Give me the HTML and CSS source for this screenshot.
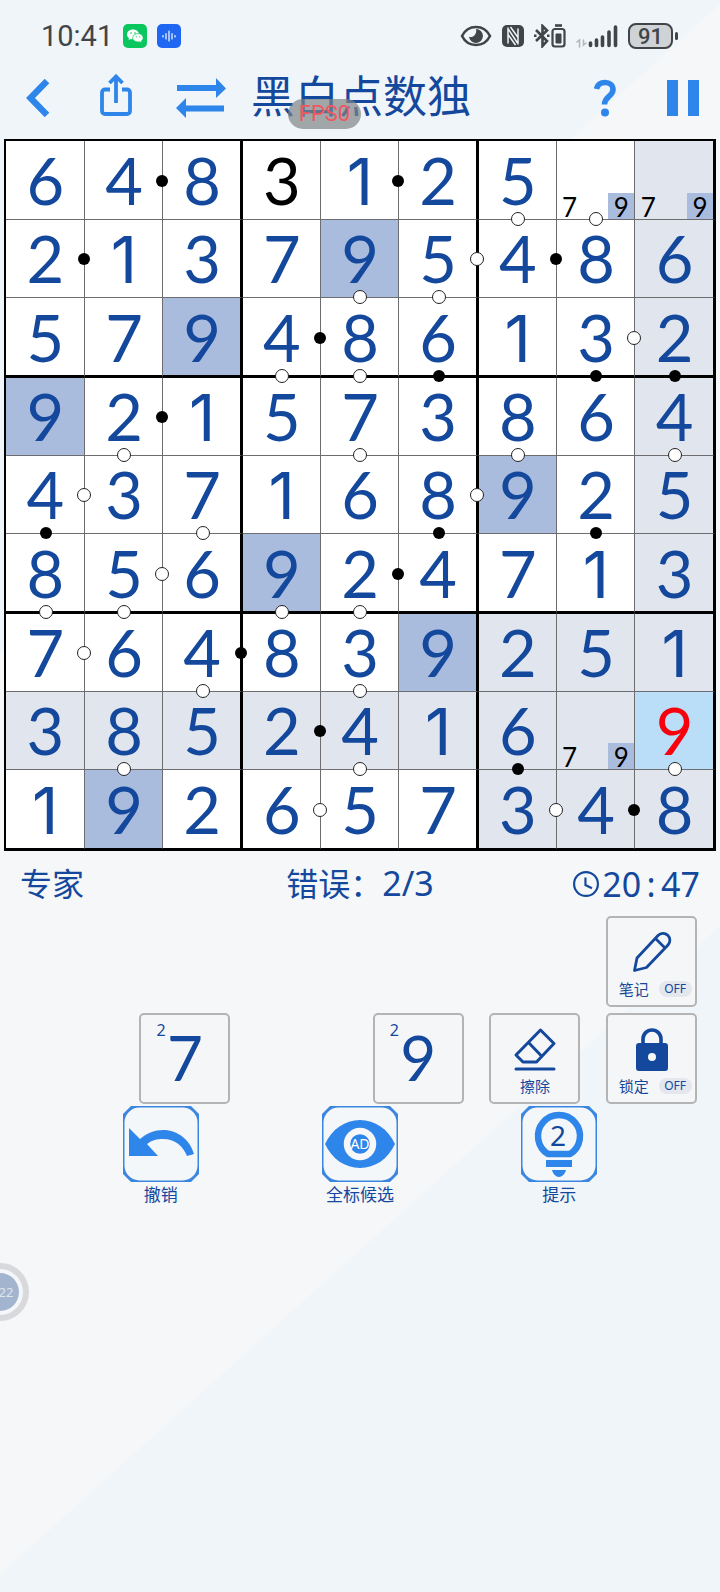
FILE: index.html
```html
<!DOCTYPE html>
<html lang="zh-CN">
<head>
<meta charset="utf-8">
<meta name="viewport" content="width=device-width, initial-scale=1">
<title>黑白点数独</title>
<link rel="stylesheet" href="styles.css">
</head>
<body>
<div class="app">
<div class="statusbar">
  <span class="clock">10:41</span>
  <svg class="app-badge" viewBox="0 0 24 24" aria-hidden="true"><rect width="24" height="24" rx="5" fill="#09c75e"/><path d="M10 5.500c-3.600 0-6 2.200-6 4.900 0 1.500.8 2.800 2 3.700L5.600 16l2.200-1.100c.8.200 1.300.3 2.200.3 3.400 0 6-2.200 6-4.800s-2.600-4.900-6-4.900z" fill="#fff"/><path d="M15 9.600c-3 0-5.300 1.900-5.300 4.200s2.300 4.200 5.300 4.200c.6 0 1.200-.1 1.700-.2l2 1-.4-1.700c1.100-.8 1.800-1.900 1.800-3.200 0-2.400-2.300-4.300-5.100-4.300z" fill="#fff" stroke="#09c75e" stroke-width=".7"/><g fill="#09c75e"><circle cx="8" cy="9" r=".8"/><circle cx="12" cy="9" r=".8"/><circle cx="13.300" cy="12.800" r=".6"/><circle cx="16.700" cy="12.800" r=".6"/></g></svg>
  <svg class="app-badge" viewBox="0 0 24 24" aria-hidden="true"><rect width="24" height="24" rx="5" fill="#1f66f2"/><path d="M6 11.500v1.500M9 9.500v5.500M12 7v10M15 9.500v5.500M18 11.500v1.500" stroke="#fff" stroke-width="1.200" stroke-linecap="round"/></svg>
  <span class="spacer"></span>
  <svg class="st-eye" viewBox="0 0 32 22" fill="none" stroke="#414549" aria-hidden="true"><path d="M2 11C5 5 10 2 16 2s11 3 14 9c-3 6-8 9-14 9S5 17 2 11z" stroke-width="2.600"/><path d="M16 4a7 7 0 1 1-7 7.500c3 2.200 8.500-2 7-7.500z" fill="#414549" stroke="none"/></svg>
  <svg class="st-nfc" viewBox="0 0 22 22" aria-hidden="true"><rect width="22" height="22" rx="5" fill="#414549"/><path d="M6 2.500v16M6.500 4.500l9 13.500M16 3.500v16M8.500 2l7.500 10.500M6 9.500l7.500 10.500" stroke="#eff4f8" stroke-width="1.500" fill="none"/></svg>
  <svg class="st-bt" viewBox="0 0 32 24" fill="none" stroke="#414549" stroke-width="2.600" aria-hidden="true"><path d="M2 6l11 11-4.500 5V2L13 6.500 2 17"/><path d="M0 11.700h2.500M13 11.700h2.500"/><rect x="18.500" y="5" width="12" height="17.500" rx="2.500" stroke-width="2.200"/><path d="M21 1.500h7"/><path d="M22 10h5v9h-5z" fill="#414549" stroke-width="1"/></svg>
  <svg class="st-signal" viewBox="0 0 42 24" fill="none" stroke="#414549" stroke-width="3.600" stroke-linecap="round" aria-hidden="true"><path d="M14.500 19v2.500M20.500 16v5.500M26.500 13v8.500M33 8v13.500M39.500 3v18.500"/><path d="M1 18l2.500-2v7M10 19l-2.500 2v-5" stroke="#b3b8bc" stroke-width="1.600"/></svg>
  <span class="battery">91</span>
</div>

<header class="topbar">
  <button class="icon-btn back" aria-label="返回"><svg viewBox="0 0 24 38"><path d="M21 2L4.500 19 21 36" fill="none" stroke="#2f86ea" stroke-width="6.400"/></svg></button>
  <button class="icon-btn share" aria-label="分享"><svg viewBox="0 0 32 42"><path d="M10 15.500H5a3 3 0 0 0-3 3V37a3 3 0 0 0 3 3h22a3 3 0 0 0 3-3V18.500a3 3 0 0 0-3-3h-5M16 29V3M9.500 9L16 2.500 22.500 9" fill="none" stroke="#2f86ea" stroke-width="3.800"/></svg></button>
  <button class="icon-btn swap" aria-label="切换"><svg viewBox="0 0 52 42" fill="#2f86ea"><path d="M2 8h39V1l10 10.500L41 21v-7H2zM49 28.500H11V21L1 31l10 10v-6.500h38z"/></svg></button>
  <h1 class="title">黑白点数独<span class="fps">FPS0</span></h1>
  <button class="icon-btn help" aria-label="帮助"><svg viewBox="0 0 22 38"><path d="M2.500 10C3.500 5.500 6.500 3.500 11 3.500c5 0 8 3 8 7 0 7-8.500 7-8.500 15" fill="none" stroke="#2f86ea" stroke-width="5.600"/><circle cx="11" cy="33.500" r="4" fill="#2f86ea"/></svg></button>
  <button class="icon-btn pause" aria-label="暂停"><svg viewBox="0 0 32 38" fill="#2f86ea"><path d="M0 1h11v36H0zM21 1h11v36H21z"/></svg></button>
</header>

<main>
<div class="board">
  <div class="cell">6</div><div class="cell rb">4</div><div class="cell">8</div><div class="cell given">3</div><div class="cell one rb">1</div><div class="cell">2</div><div class="cell bw">5</div><div class="cell notes bw"><i>7</i><i></i><i class="hit">9</i></div><div class="cell line notes"><i>7</i><i></i><i class="hit">9</i></div>
  <div class="cell rb">2</div><div class="cell one">1</div><div class="cell">3</div><div class="cell">7</div><div class="cell same bw">9</div><div class="cell rw bw">5</div><div class="cell rb">4</div><div class="cell">8</div><div class="cell line">6</div>
  <div class="cell">5</div><div class="cell">7</div><div class="cell same">9</div><div class="cell rb bw">4</div><div class="cell bw">8</div><div class="cell bb">6</div><div class="cell one">1</div><div class="cell rw bb">3</div><div class="cell line bb">2</div>
  <div class="cell same">9</div><div class="cell rb bw">2</div><div class="cell one">1</div><div class="cell">5</div><div class="cell bw">7</div><div class="cell">3</div><div class="cell bw">8</div><div class="cell">6</div><div class="cell line bw">4</div>
  <div class="cell rw bb">4</div><div class="cell">3</div><div class="cell bw">7</div><div class="cell one">1</div><div class="cell">6</div><div class="cell rw bb">8</div><div class="cell same">9</div><div class="cell bb">2</div><div class="cell line">5</div>
  <div class="cell bw">8</div><div class="cell rw bw">5</div><div class="cell">6</div><div class="cell same bw">9</div><div class="cell rb bw">2</div><div class="cell">4</div><div class="cell">7</div><div class="cell one">1</div><div class="cell line">3</div>
  <div class="cell rw">7</div><div class="cell">6</div><div class="cell rb bw">4</div><div class="cell">8</div><div class="cell bw">3</div><div class="cell same">9</div><div class="cell line">2</div><div class="cell line">5</div><div class="cell one line">1</div>
  <div class="cell line">3</div><div class="cell line bw">8</div><div class="cell line">5</div><div class="cell line rb">2</div><div class="cell line bw">4</div><div class="cell one line">1</div><div class="cell line bb">6</div><div class="cell line notes"><i>7</i><i></i><i class="hit">9</i></div><div class="cell selected bw">9</div>
  <div class="cell one">1</div><div class="cell same">9</div><div class="cell">2</div><div class="cell rw">6</div><div class="cell">5</div><div class="cell">7</div><div class="cell line rw">3</div><div class="cell line rb">4</div><div class="cell line">8</div>
</div>

<div class="info">
  <span>专家</span>
  <span class="errors">错误：<span class="num">2/3</span></span>
  <span class="timer"><svg viewBox="0 0 24 24" fill="none" stroke="#14489c" stroke-width="2" aria-hidden="true"><circle cx="12" cy="12" r="11"/><path d="M11.500 6v7l6 3"/></svg><span class="num">20<b>:</b>47</span></span>
</div>

<div class="keypad">
  <button class="key c6"><svg viewBox="0 0 44 44" fill="none" stroke="#14489c" stroke-width="2.800" stroke-linejoin="round"><path d="M4.500 40.500l2.500-12.500L28 5.500a6.800 6.800 0 0 1 10 9.500L16.500 37.500zM25.500 8.500l9.500 9.500"/></svg><span class="key-label">笔记<em>OFF</em></span></button>
  <button class="key digit c2"><sup>2</sup>7</button>
  <button class="key digit c4"><sup>2</sup>9</button>
  <button class="key c5"><svg viewBox="0 0 44 44" fill="none" stroke="#14489c" stroke-width="3"><path d="M27.500 3L41 16.500 23.500 35H10L3 28zM15.500 15.500L28.500 29" stroke-linejoin="round"/><path d="M3 42h38" stroke-linecap="round"/></svg><span class="key-label">擦除</span></button>
  <button class="key c6"><svg viewBox="0 0 44 44"><path d="M13 18v-6a9 9 0 0 1 18 0v6" fill="none" stroke="#14489c" stroke-width="3.600"/><path d="M9 16h26a3 3 0 0 1 3 3v22a3 3 0 0 1-3 3H9a3 3 0 0 1-3-3V19a3 3 0 0 1 3-3z" fill="#14489c"/><circle cx="22" cy="30" r="4" fill="#f5f6f7"/></svg><span class="key-label">锁定<em>OFF</em></span></button>
</div>

<div class="actions">
  <button class="action"><svg viewBox="0 0 78 78"><path class="frame" d="M1 9L9 1h60l8 8v60l-8 8H9l-8-8z"/><rect class="hole" x="2.500" y="2.500" width="73" height="73" rx="15"/><path d="M7 23l11 11c7-6 15-9 23-9 15 0 27 10 31 24l-7 2c-4-10-12-17-24-17-6 0-11 1-16 5l11 12H7z" fill="#2f86ea"/></svg>撤销</button>
  <button class="action"><svg viewBox="0 0 78 78"><path class="frame" d="M1 9L9 1h60l8 8v60l-8 8H9l-8-8z"/><rect class="hole" x="2.500" y="2.500" width="73" height="73" rx="15"/><path d="M4 39C11 24 24 15 39 15s28 9 35 24c-7 15-20 24-35 24S11 54 4 39z" fill="#2f86ea"/><circle cx="39" cy="39" r="13" fill="#2f86ea" stroke="#f5f7f9" stroke-width="6.500"/><text x="39" y="44" class="ad">AD</text></svg>全标候选</button>
  <button class="action"><svg viewBox="0 0 78 78"><path class="frame" d="M1 9L9 1h60l8 8v60l-8 8H9l-8-8z"/><rect class="hole" x="2.500" y="2.500" width="73" height="73" rx="15"/><path d="M28 49a21 21 0 1 1 22 0z" fill="none" stroke="#2f86ea" stroke-width="6.500" stroke-linejoin="round"/><path d="M26 55h26v7H26zM32 65h14c-1 4-4 7-7 7s-6-3-7-7z" fill="#2f86ea"/><text x="38" y="41" class="hint">2</text></svg>提示</button>
</div>
</main>
<div class="bubble"><span>22</span></div>
</div>
</body>
</html>
```
FILE: styles.css
```css
* { box-sizing: border-box; }
body {
  margin: 0;
  font-family: "Noto Sans", "Noto Sans CJK SC", sans-serif;
  color: #14489c;
}
button {
  margin: 0;
  padding: 0;
  border: 0;
  background: none;
  font: inherit;
  color: inherit;
}
svg { display: block; }
.app {
  position: relative;
  min-height: 100vh;
  overflow: hidden;
  background: linear-gradient(138deg, #eff5f9 29%, #f5f7f9 29.2%, #f5f7f9 70.2%, #eff5f9 70.4%);
}

.statusbar {
  display: flex;
  align-items: center;
  gap: 10px;
  height: 72px;
  padding: 0 47px 0 41px;
  color: #414549;
}
.clock { font: 29px/32px Roboto, sans-serif; }
.app-badge { width: 24px; height: 24px; }
.spacer { flex: 1; }
.st-eye { width: 32px; height: 22px; }
.st-nfc { width: 22px; height: 22px; }
.st-bt { width: 32px; height: 24px; }
.st-signal { width: 42px; height: 24px; }
.battery {
  position: relative;
  width: 45px;
  height: 26px;
  border: 2px solid #414549;
  border-radius: 8px;
  background: #d0d3d6;
  font: 500 22px/23px Roboto, sans-serif;
  text-align: center;
}
.battery::after {
  content: "";
  position: absolute;
  right: -7px;
  top: 7px;
  width: 3px;
  height: 8px;
  border-radius: 2px;
  background: #414549;
}

.topbar {
  display: flex;
  align-items: center;
  height: 68px;
  padding: 0 21px 20px 26px;
}
.icon-btn svg { width: 100%; }
.back { width: 24px; margin-right: 50px; padding-top: 3px; }
.share { width: 32px; margin-right: 43px; padding-bottom: 3px; }
.swap { width: 52px; margin-right: 24px; padding-top: 3px; }
.title {
  position: relative;
  margin: 0;
  font-size: 44px;
  line-height: 52px;
  font-weight: 400;
  white-space: nowrap;
}
.fps {
  position: absolute;
  left: 37px;
  top: 29px;
  width: 73px;
  border-radius: 15px;
  background: rgba(128, 132, 136, 0.7);
  color: #f0575f;
  font: 22px/30px Roboto, sans-serif;
  text-align: center;
}
.help { width: 22px; margin-left: auto; margin-right: 51px; padding-top: 4px; }
.pause { width: 32px; padding-top: 4px; }

.board {
  display: grid;
  grid-template: repeat(9, minmax(0, 1fr)) / repeat(9, minmax(0, 1fr));
  aspect-ratio: 1;
  margin: 1px 6px 0;
  box-shadow: 0 0 0 2px #000;
  isolation: isolate;
  background: #fff;
}
.cell {
  position: relative;
  display: flex;
  align-items: center;
  justify-content: center;
  border: 0 solid #6d6d70;
  border-width: 0 1px 1px 0;
  background: #fff;
  font: 65px/72px Lato, sans-serif;
  padding: 0 0 0 1px;
}
.one { padding-top: 4px; font-family: Inter, sans-serif; }
.cell:nth-child(3n) { border-right: 2px solid #000; }
.cell:nth-child(9n + 4), .cell:nth-child(9n + 7) { border-left: 1px solid #000; }
.cell:nth-child(n + 19):nth-child(-n + 27), .cell:nth-child(n + 46):nth-child(-n + 54) { border-bottom: 2px solid #000; }
.cell:nth-child(n + 28):nth-child(-n + 36), .cell:nth-child(n + 55):nth-child(-n + 63) { border-top: 1px solid #000; }
.cell:nth-child(9n) { border-right: 1px solid #000; }
.cell:nth-child(n + 73) { border-bottom: 1px solid #000; }
.given { color: #000; }
.line { background: #e1e6ee; }
.same { background: #aabcde; }
.selected { background: #badef8; color: #f8000c; }

.rb::before, .rw::before, .bb::after, .bw::after {
  content: "";
  position: absolute;
  z-index: 1;
  width: 12px;
  height: 12px;
  border: 1px solid #222;
  border-radius: 50%;
  background: #fff;
}
.rb::before, .bb::after {
  border-color: transparent;
  background: #000 padding-box;
}
.rb::before, .rw::before { right: -7px; top: calc(50% - 6px); }
.bb::after, .bw::after { bottom: -7px; left: calc(50% - 6px); }
.cell:nth-child(3n)::before { right: -8px; }
.cell:nth-child(n + 19):nth-child(-n + 27)::after,
.cell:nth-child(n + 46):nth-child(-n + 54)::after { bottom: -8px; }
.notes {
  display: grid;
  grid-template-columns: repeat(3, 1fr);
  align-items: end;
  justify-content: stretch;
  padding: 0;
}
.notes i {
  height: 26px;
  color: #000;
  font: 26px/28px Lato, sans-serif;
  text-align: center;
}
.notes .hit { background: #aabcde; }

.info {
  display: grid;
  grid-template-columns: 1fr auto 1fr;
  align-items: center;
  padding: 12px 20px 0;
  font-size: 32px;
  line-height: 44px;
}
.num { font-size: 34px; }
.timer { display: flex; align-items: center; justify-content: flex-end; }
.timer svg { width: 26px; height: 26px; margin-right: 3px; }
.timer b { display: inline-block; width: 20px; font-weight: 400; text-align: center; }

.keypad {
  display: grid;
  grid-template-columns: repeat(6, 1fr);
  gap: 6px 0;
  justify-items: center;
  margin: 10px 10px 0;
}
.c2 { grid-column: 2; }
.c4 { grid-column: 4; }
.c5 { grid-column: 5; }
.c6 { grid-column: 6; }
.key {
  position: relative;
  display: flex;
  flex-direction: column;
  align-items: center;
  width: 91px;
  height: 91px;
  padding-top: 12px;
  border: 2px solid #b4b4b5;
  border-radius: 5px;
  background: #f5f6f7;
}
.key svg { width: 44px; height: 44px; }
.key-label {
  display: flex;
  align-items: center;
  gap: 10px;
  margin-top: 3px;
  font-size: 15px;
  line-height: 24px;
  white-space: nowrap;
}
.key-label em {
  width: 33px;
  margin-right: -7px;
  border-radius: 8px;
  background: #e4e7ed;
  font-size: 12px;
  font-style: normal;
  line-height: 16px;
  text-align: center;
}
.digit { padding: 6px 0 0; font: 62px/72px Lato, sans-serif; }
.digit sup {
  position: absolute;
  left: 15px;
  top: 6px;
  font: 16px/18px "Noto Sans", sans-serif;
}

.actions {
  display: grid;
  grid-template-columns: repeat(3, 1fr);
  margin: 1px 61px 0;
}
.action { display: grid; justify-items: center; font-size: 17px; line-height: 24px; }
.action svg { width: 78px; height: 78px; }
.frame { fill: #3a86e0; }
.hole { fill: #f4f7f9; }
.ad { fill: #fff; font-size: 14px; text-anchor: middle; }
.hint { fill: #14489c; font-size: 28px; text-anchor: middle; }

.bubble {
  position: absolute;
  left: -29px;
  top: 1263px;
  display: grid;
  place-items: center;
  width: 58px;
  height: 58px;
  border: 6px solid #d8d9db;
  border-radius: 50%;
  background: #f3f7fb;
}
.bubble span {
  width: 38px;
  height: 38px;
  padding-left: 12px;
  border-radius: 50%;
  background: #a3b4cf;
  color: #dfe4ea;
  font-size: 13px;
  line-height: 38px;
  text-align: center;
}
```
